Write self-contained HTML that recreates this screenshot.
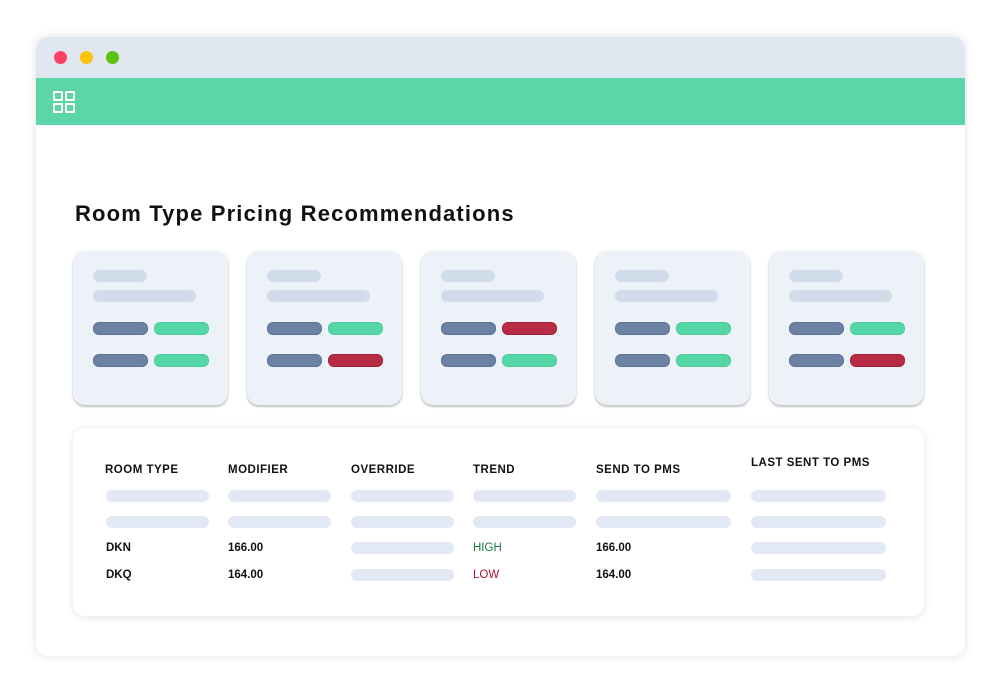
<!DOCTYPE html>
<html><head><style>
*{margin:0;padding:0;box-sizing:border-box}
body{width:1000px;height:692px;background:#fff;position:relative;font-family:"Liberation Sans",sans-serif;overflow:hidden}
.a{position:absolute}
.win{left:36px;top:37px;width:929px;height:619px;border-radius:12px;background:#fff;box-shadow:0 0 10px rgba(0,0,0,.12);overflow:hidden}
.p{position:absolute;border-radius:6px}
.l{background:#d1dcea}
.d{background:#6c82a2;border:1px solid #5d7394}
.g{background:#55d6a6;border:1px solid #4ccc9c}
.r{background:#b82b45;border:1px solid #a51f38}
.card{position:absolute;top:251px;width:155px;height:154px;background:#edf1f8;border-radius:12px;box-shadow:0 2px 2px rgba(0,0,0,.22),0 0 3px rgba(0,0,0,.06)}
.tb{position:absolute;background:#e2e9f5;border-radius:6px;height:12px}
.h{position:absolute;font-size:11.5px;font-weight:bold;color:#111;letter-spacing:.5px}
.v{position:absolute;font-size:11.5px;font-weight:bold;color:#111}
</style></head><body>
<div class="a win">
 <div class="a" style="left:0;top:0;width:929px;height:41px;background:#e1e7f1"></div>
 <div class="a" style="left:0;top:41px;width:929px;height:47px;background:#5cd6a9"></div>
 <div class="a" style="left:18px;top:14px;width:13px;height:13px;border-radius:50%;background:#fc4263"></div>
 <div class="a" style="left:44px;top:14px;width:13px;height:13px;border-radius:50%;background:#fec30b"></div>
 <div class="a" style="left:70px;top:14px;width:13px;height:13px;border-radius:50%;background:#5dc110"></div>
 <div class="a" style="left:17px;top:54px;width:10px;height:10px;border:2px solid #fff;border-radius:1px"></div>
 <div class="a" style="left:29px;top:54px;width:10px;height:10px;border:2px solid #fff;border-radius:1px"></div>
 <div class="a" style="left:17px;top:66px;width:10px;height:10px;border:2px solid #fff;border-radius:1px"></div>
 <div class="a" style="left:29px;top:66px;width:10px;height:10px;border:2px solid #fff;border-radius:1px"></div>
</div>
<div class="a" style="left:75px;top:201px;font-size:22px;font-weight:bold;color:#111;letter-spacing:1.15px">Room Type Pricing Recommendations</div>

<div class="card" style="left:73px"><div class="p l" style="left:20px;top:19px;width:54px;height:12px"></div><div class="p l" style="left:20px;top:39px;width:103px;height:12px"></div><div class="p d" style="left:20px;top:71px;width:55px;height:13px"></div><div class="p g" style="left:81px;top:71px;width:55px;height:13px"></div><div class="p d" style="left:20px;top:103px;width:55px;height:13px"></div><div class="p g" style="left:81px;top:103px;width:55px;height:13px"></div></div>
<div class="card" style="left:247px"><div class="p l" style="left:20px;top:19px;width:54px;height:12px"></div><div class="p l" style="left:20px;top:39px;width:103px;height:12px"></div><div class="p d" style="left:20px;top:71px;width:55px;height:13px"></div><div class="p g" style="left:81px;top:71px;width:55px;height:13px"></div><div class="p d" style="left:20px;top:103px;width:55px;height:13px"></div><div class="p r" style="left:81px;top:103px;width:55px;height:13px"></div></div>
<div class="card" style="left:421px"><div class="p l" style="left:20px;top:19px;width:54px;height:12px"></div><div class="p l" style="left:20px;top:39px;width:103px;height:12px"></div><div class="p d" style="left:20px;top:71px;width:55px;height:13px"></div><div class="p r" style="left:81px;top:71px;width:55px;height:13px"></div><div class="p d" style="left:20px;top:103px;width:55px;height:13px"></div><div class="p g" style="left:81px;top:103px;width:55px;height:13px"></div></div>
<div class="card" style="left:595px"><div class="p l" style="left:20px;top:19px;width:54px;height:12px"></div><div class="p l" style="left:20px;top:39px;width:103px;height:12px"></div><div class="p d" style="left:20px;top:71px;width:55px;height:13px"></div><div class="p g" style="left:81px;top:71px;width:55px;height:13px"></div><div class="p d" style="left:20px;top:103px;width:55px;height:13px"></div><div class="p g" style="left:81px;top:103px;width:55px;height:13px"></div></div>
<div class="card" style="left:769px"><div class="p l" style="left:20px;top:19px;width:54px;height:12px"></div><div class="p l" style="left:20px;top:39px;width:103px;height:12px"></div><div class="p d" style="left:20px;top:71px;width:55px;height:13px"></div><div class="p g" style="left:81px;top:71px;width:55px;height:13px"></div><div class="p d" style="left:20px;top:103px;width:55px;height:13px"></div><div class="p r" style="left:81px;top:103px;width:55px;height:13px"></div></div>

<div class="a" style="left:73px;top:428px;width:851px;height:188px;background:#fff;border-radius:12px;box-shadow:0 1px 8px rgba(0,0,0,.12)"></div>
<div class="h" style="left:105px;top:464px">ROOM TYPE</div>
<div class="h" style="left:228px;top:464px">MODIFIER</div>
<div class="h" style="left:351px;top:464px">OVERRIDE</div>
<div class="h" style="left:473px;top:464px">TREND</div>
<div class="h" style="left:596px;top:464px">SEND TO PMS</div>
<div class="h" style="left:751px;top:457px">LAST SENT TO PMS</div>

<div class="tb" style="left:106px;top:490px;width:103px"></div><div class="tb" style="left:228px;top:490px;width:103px"></div><div class="tb" style="left:351px;top:490px;width:103px"></div><div class="tb" style="left:473px;top:490px;width:103px"></div><div class="tb" style="left:596px;top:490px;width:135px"></div><div class="tb" style="left:751px;top:490px;width:135px"></div>
<div class="tb" style="left:106px;top:516px;width:103px"></div><div class="tb" style="left:228px;top:516px;width:103px"></div><div class="tb" style="left:351px;top:516px;width:103px"></div><div class="tb" style="left:473px;top:516px;width:103px"></div><div class="tb" style="left:596px;top:516px;width:135px"></div><div class="tb" style="left:751px;top:516px;width:135px"></div>
<div class="tb" style="left:351px;top:542px;width:103px"></div><div class="tb" style="left:751px;top:542px;width:135px"></div>
<div class="tb" style="left:351px;top:569px;width:103px"></div><div class="tb" style="left:751px;top:569px;width:135px"></div>

<div class="v" style="left:106px;top:542px">DKN</div>
<div class="v" style="left:228px;top:542px">166.00</div>
<div class="v" style="left:473px;top:542px;color:#1b7a3e;font-weight:normal">HIGH</div>
<div class="v" style="left:596px;top:542px">166.00</div>
<div class="v" style="left:106px;top:569px">DKQ</div>
<div class="v" style="left:228px;top:569px">164.00</div>
<div class="v" style="left:473px;top:569px;color:#b8112f;font-weight:normal">LOW</div>
<div class="v" style="left:596px;top:569px">164.00</div>
</body></html>
